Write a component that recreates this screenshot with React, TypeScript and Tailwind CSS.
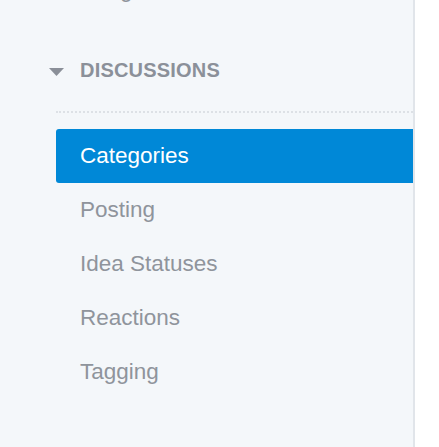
import React from 'react';

const items = ['Categories', 'Posting', 'Idea Statuses', 'Reactions', 'Tagging'];

const font = { fontFamily: '"Liberation Sans", Arial, sans-serif' };

export default function App() {
  return (
    <div className="flex h-[447px] w-[439px] overflow-hidden bg-white" style={font}>
      <aside className="w-[415px] shrink-0 overflow-hidden border-r-2 border-[#e1e5ea] bg-[#f4f7fa]">
        {/* tail of the previous section, scrolled out of view */}
        <div className="-mt-[37px] ml-[56px] flex h-[54px] items-center pl-6 text-[22.5px] text-[#8f949c]">
          Badges
        </div>

        {/* section header */}
        <div className="mt-[39px] flex h-[28px] items-center pl-[49px]">
          <svg width="15" height="8" viewBox="0 0 15 8" className="mt-[3px]">
            <polygon points="0,0 15,0 7.5,8" fill="#8a8f98" />
          </svg>
          <span className="ml-[16px] text-[20px] font-bold tracking-[0.2px] text-[#8b9099]">DISCUSSIONS</span>
        </div>

        <div className="ml-[56px] mt-[27px] border-t-2 border-dotted border-[#dde1e6]" />

        <ul className="ml-[56px] mt-4">
          {items.map((label, i) => (
            <li
              key={label}
              className={
                i === 0
                  ? 'flex h-[54px] items-center rounded-l-[3px] bg-[#0088d7] pl-6 text-[22.5px] text-white'
                  : 'flex h-[54px] items-center pl-6 text-[22.5px] text-[#8f949c]'
              }
            >
              {label}
            </li>
          ))}
        </ul>
      </aside>
      <main className="flex-1 bg-white" />
    </div>
  );
}
